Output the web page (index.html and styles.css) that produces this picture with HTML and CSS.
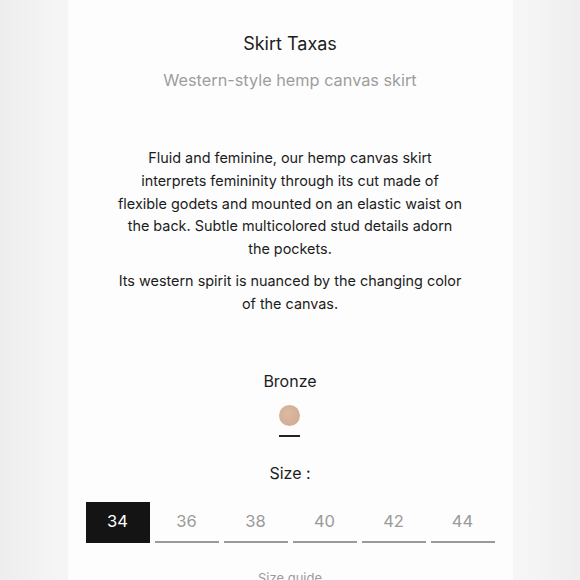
FILE: index.html
```html
<!DOCTYPE html>
<html>
<head>
<meta charset="utf-8">
<link rel="stylesheet" href="styles.css">
</head>
<body>
<main class="panel">
  <h1 class="title">Skirt Taxas</h1>
  <p class="subtitle">Western-style hemp canvas skirt</p>
  <div class="desc">
    <p>Fluid and feminine, our hemp canvas skirt interprets femininity through its cut made of flexible godets and mounted on an elastic waist on the back. Subtle multicolored stud details adorn the pockets.</p>
    <p>Its western spirit is nuanced by the changing color of the canvas.</p>
  </div>
  <div class="color">
    <div class="color-name">Bronze</div>
    <span class="swatch"></span>
    <span class="swatch-line"></span>
  </div>
  <div class="size-label">Size :</div>
  <div class="sizes">
    <button class="size active">34</button>
    <button class="size">36</button>
    <button class="size">38</button>
    <button class="size">40</button>
    <button class="size">42</button>
    <button class="size">44</button>
  </div>
  <div class="guide">Size guide</div>
</main>
</body>
</html>
```
FILE: styles.css
```css
html, body {
  margin: 0;
  height: 580px;
  overflow: hidden;
}
body {
  background: linear-gradient(90deg, #ededed 0%, #f5f5f5 10%, #f6f6f6 90%, #eeeeee 100%);
  font-family: Inter, "Noto Sans", sans-serif;
  color: #1c1c1c;
}
.panel {
  width: 445px;
  margin: 0 auto;
  min-height: 580px;
  background: #fdfdfd;
  display: flex;
  flex-direction: column;
  align-items: center;
  padding-top: 32px;
  box-sizing: border-box;
}
.title {
  margin: 0;
  font-size: 18px;
  font-weight: 400;
  line-height: 24px;
}
.subtitle {
  margin: 12px 0 0;
  font-size: 16.3px;
  color: #9d9d9d;
  line-height: 24px;
}
.desc {
  margin-top: 55px;
  width: 350px;
  text-align: center;
  font-size: 14.4px;
  line-height: 22.8px;
}
.desc p {
  margin: 0 0 9px;
}
.color {
  margin-top: 45px;
  display: flex;
  flex-direction: column;
  align-items: center;
}
.color-name {
  font-size: 16px;
  line-height: 22px;
}
.swatch {
  margin-top: 13px;
  width: 21px;
  height: 21px;
  border-radius: 50%;
  background: radial-gradient(circle at 40% 40%, #dcb9a2, #cfa98f);
}
.swatch-line {
  margin-top: 9px;
  width: 21px;
  height: 2px;
  background: #222;
}
.size-label {
  margin-top: 25px;
  font-size: 16px;
  line-height: 22px;
}
.sizes {
  margin-top: 18px;
  display: flex;
  gap: 5px;
}
.size {
  width: 64px;
  height: 41px;
  border: 0;
  border-bottom: 2px solid #9a9a9a;
  background: transparent;
  font-family: Inter, "Noto Sans", sans-serif;
  font-size: 16.5px;
  color: #9a9a9a;
  padding: 0;
}
.size.active {
  background: #141414;
  color: #fff;
  border-bottom-color: #141414;
}
.guide {
  margin-top: 27px;
  font-size: 13px;
  color: #9a9a9a;
}
```
